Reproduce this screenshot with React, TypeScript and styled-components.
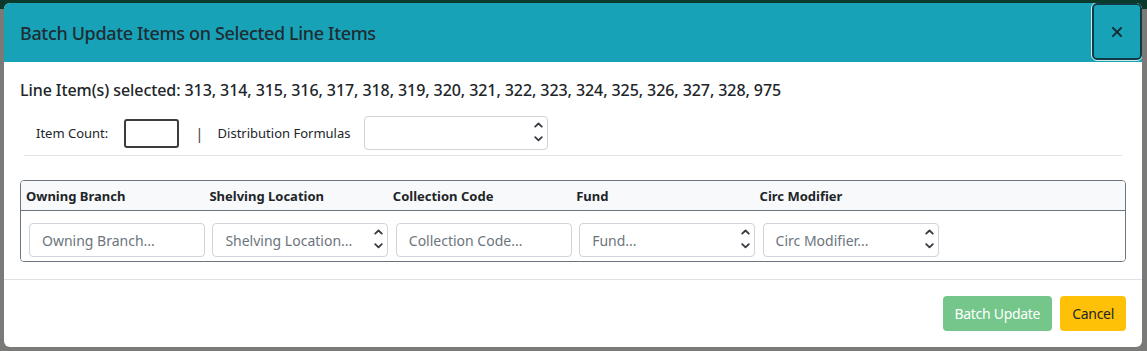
import React from "react";
import styled, { createGlobalStyle } from "styled-components";

const GlobalStyle = createGlobalStyle`
  html, body { margin: 0; padding: 0; }
  body {
    width: 1147px;
    height: 351px;
    overflow: hidden;
    background: #7a7b79;
    font-family: "Segoe UI", "Noto Sans", "Open Sans", sans-serif;
    color: #212529;
  }
  * { box-sizing: border-box; }
`;

const Page = styled.div`
  position: relative;
  width: 1147px;
  height: 351px;
`;

const TopNav = styled.div`
  height: 9px;
  background: #0b3a2c;
`;

const Backdrop = styled.div`
  position: absolute;
  inset: 0;
  padding: 3px 0 0 4px;
`;

const Dialog = styled.div`
  width: 1138px;
  background: #fff;
  border-radius: 6px;
  overflow: hidden;
  display: flex;
  flex-direction: column;
`;

const Header = styled.div`
  height: 59px;
  background: #17a2b8;
  display: flex;
  align-items: center;
  padding-left: 16px;
`;

const Title = styled.h5`
  margin: 0;
  font-size: 18px;
  font-weight: 500;
  letter-spacing: -0.35px;
  color: #1f2d33;
  flex: 1;
`;

const CloseButton = styled.button`
  width: 50px;
  height: 57px;
  align-self: flex-start;
  background: transparent;
  border: 2px solid #123a42;
  border-radius: 5px;
  outline: 1px solid #cfe9ee;
  padding: 0;
  display: flex;
  align-items: center;
  justify-content: center;
`;

const Body = styled.div`
  padding: 16px 16px 17px 16px;
  display: flex;
  flex-direction: column;
`;

const SelectedLine = styled.div`
  font-size: 16px;
  line-height: 24px;
  font-weight: 500;
  letter-spacing: -0.08px;
`;

const CountRow = styled.div`
  margin-top: 14px;
  display: flex;
  align-items: center;
  padding-left: 16px;
  font-size: 13px;
  color: #212529;
`;

const Label = styled.span<{ $gap: number }>`
  margin-right: ${(p) => p.$gap}px;
`;

const Pipe = styled.span`
  margin: 0 14px 0 16px;
  font-size: 15px;
  color: #444;
`;

const CountInput = styled.div`
  width: 55px;
  height: 29px;
  border: 2px solid #3a3d40;
  border-radius: 3px;
`;

const SelectBox = styled.div<{ $w: number }>`
  width: ${(p) => p.$w}px;
  height: 34px;
  border: 1px solid #ced4da;
  border-radius: 4px;
  background: #fff;
  display: flex;
  align-items: center;
  padding: 0 4px 0 12px;
  font-size: 14px;
  color: #6c757d;
`;

const SelectText = styled.span`
  flex: 1;
  white-space: nowrap;
  overflow: hidden;
`;

const Divider = styled.div`
  margin: 5px 4px 0;
  height: 1px;
  background: #e3e5e8;
`;

const Table = styled.div`
  margin-top: 24px;
  border: 1px solid #6c757d;
  border-radius: 4px;
  overflow: hidden;
`;

const Row = styled.div<{ $head?: boolean }>`
  display: grid;
  grid-template-columns: repeat(5, 183.4px) 1fr;
  background: ${(p) => (p.$head ? "#f8f9fa" : "#fff")};
  border-bottom: ${(p) => (p.$head ? "1px solid #6c757d" : "none")};
  height: ${(p) => (p.$head ? "30px" : "50px")};
  align-items: ${(p) => (p.$head ? "center" : "start")};
`;

const HeadCell = styled.div`
  padding-left: 5px;
  font-size: 13px;
  font-weight: 700;
  color: #212529;
`;

const Cell = styled.div`
  padding: 12px 0 0 8px;
`;

const Chevrons = () => (
  <svg width="9" height="22" viewBox="0 0 9 22" fill="none" stroke="#343a40" strokeWidth="1.8" strokeLinecap="round" strokeLinejoin="round">
    <path d="M1.2 4.6 4.5 1.5 7.8 4.6" />
    <path d="M1.2 15.2 4.5 18.3 7.8 15.2" />
  </svg>
);

const CloseIcon = () => (
  <svg width="10" height="10" viewBox="0 0 10 10" stroke="#142b30" strokeWidth="1.9" strokeLinecap="square">
    <path d="M1 1 9 9M9 1 1 9" />
  </svg>
);

const Footer = styled.div`
  border-top: 1px solid #dee2e6;
  padding: 16px;
  display: flex;
  justify-content: flex-end;
  gap: 8px;
`;

const Button = styled.button<{ $variant: "success" | "warning" }>`
  height: 35px;
  padding: 0 12px;
  border: none;
  border-radius: 4px;
  font-family: inherit;
  font-size: 14px;
  letter-spacing: -0.3px;
  background: ${(p) => (p.$variant === "success" ? "#74c68b" : "#ffc107")};
  color: ${(p) => (p.$variant === "success" ? "#fff" : "#212529")};
`;

const columns: { label: string; placeholder: string; select: boolean }[] = [
  { label: "Owning Branch", placeholder: "Owning Branch...", select: false },
  { label: "Shelving Location", placeholder: "Shelving Location...", select: true },
  { label: "Collection Code", placeholder: "Collection Code...", select: false },
  { label: "Fund", placeholder: "Fund...", select: true },
  { label: "Circ Modifier", placeholder: "Circ Modifier...", select: true },
];

const ids = [313, 314, 315, 316, 317, 318, 319, 320, 321, 322, 323, 324, 325, 326, 327, 328, 975];

export default function App() {
  return (
    <Page>
      <GlobalStyle />
      <TopNav />
      <Backdrop>
        <Dialog>
          <Header>
            <Title>Batch Update Items on Selected Line Items</Title>
            <CloseButton aria-label="Close">
              <CloseIcon />
            </CloseButton>
          </Header>
          <Body>
            <SelectedLine>Line Item(s) selected: {ids.join(", ")}</SelectedLine>
            <CountRow>
              <Label $gap={16}>Item Count:</Label>
              <CountInput />
              <Pipe>|</Pipe>
              <Label $gap={14}>Distribution Formulas</Label>
              <SelectBox $w={184}>
                <SelectText />
                <Chevrons />
              </SelectBox>
            </CountRow>
            <Divider />
            <Table>
              <Row $head>
                {columns.map((c) => (
                  <HeadCell key={c.label}>{c.label}</HeadCell>
                ))}
              </Row>
              <Row>
                {columns.map((c) => (
                  <Cell key={c.label}>
                    <SelectBox $w={176}>
                      <SelectText>{c.placeholder}</SelectText>
                      {c.select && <Chevrons />}
                    </SelectBox>
                  </Cell>
                ))}
              </Row>
            </Table>
          </Body>
          <Footer>
            <Button $variant="success">Batch Update</Button>
            <Button $variant="warning">Cancel</Button>
          </Footer>
        </Dialog>
      </Backdrop>
    </Page>
  );
}
